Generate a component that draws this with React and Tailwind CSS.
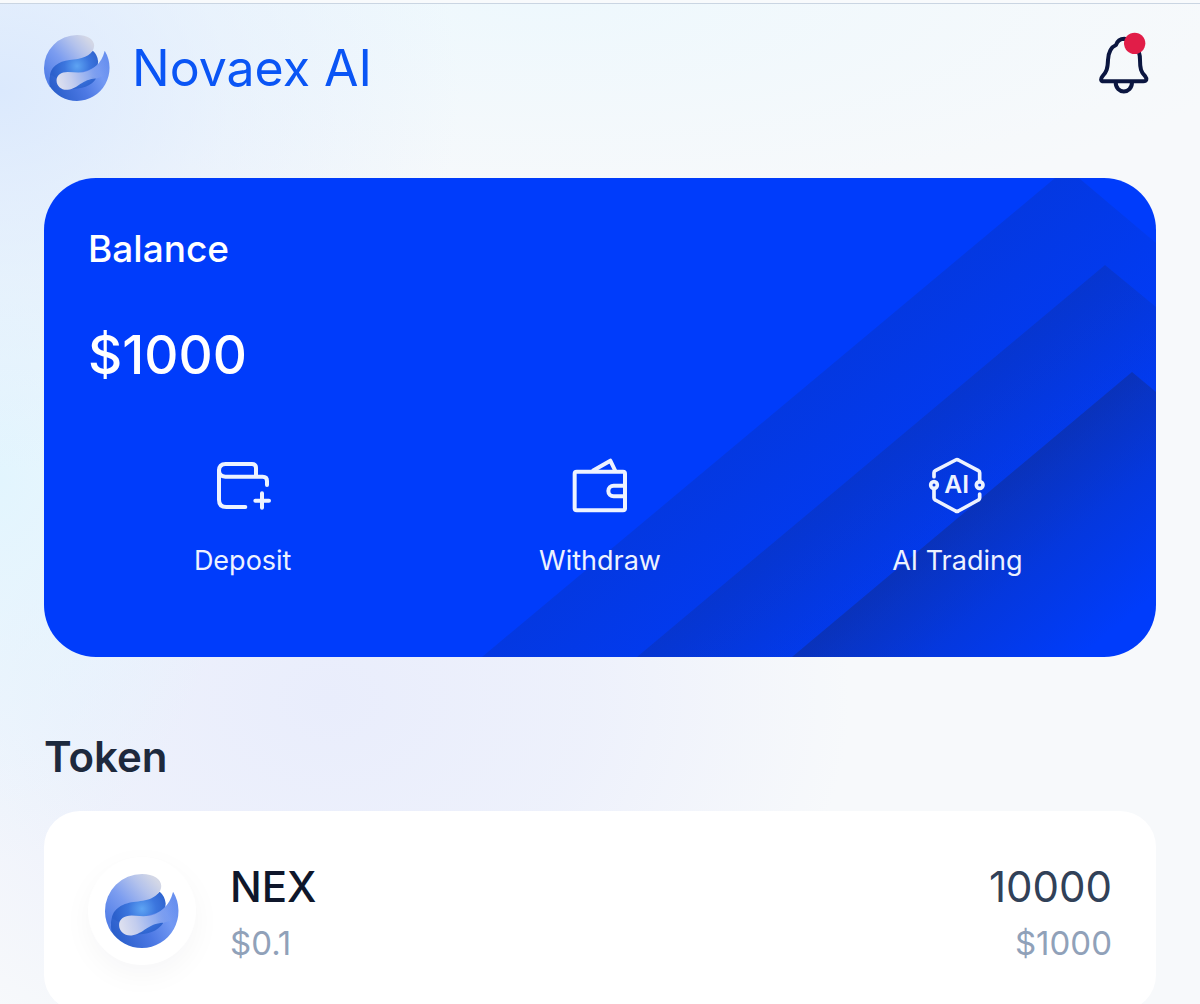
import React, { useId } from "react";

function Logo({ className }) {
  const id = useId();

  return (
    <svg viewBox="0 0 100 100" className={className} aria-hidden="true">
      <defs>
        <linearGradient id={`${id}-top`} x1="0.9" y1="0.1" x2="0.1" y2="0.85">
          <stop offset="0" stopColor="#d3d7e6" />
          <stop offset="0.25" stopColor="#b3c2ec" />
          <stop offset="0.6" stopColor="#7c9df0" />
          <stop offset="1" stopColor="#5480e8" />
        </linearGradient>
        <radialGradient
          id={`${id}-mid`}
          gradientUnits="userSpaceOnUse"
          cx="50"
          cy="47"
          r="38"
        >
          <stop offset="0" stopColor="#5ea4f3" />
          <stop offset="0.5" stopColor="#3c76de" />
          <stop offset="1" stopColor="#2c60cc" />
        </radialGradient>
        <linearGradient id={`${id}-body`} x1="0.05" y1="0.7" x2="1" y2="0.3">
          <stop offset="0" stopColor="#2c60cc" />
          <stop offset="0.45" stopColor="#4d79e4" />
          <stop offset="0.8" stopColor="#7399f3" />
          <stop offset="1" stopColor="#6890ef" />
        </linearGradient>
        <linearGradient id={`${id}-drop`} x1="0" y1="0.6" x2="1" y2="0.4">
          <stop offset="0" stopColor="#dcdfef" />
          <stop offset="0.25" stopColor="#c3cdee" />
          <stop offset="0.6" stopColor="#8eabf0" />
          <stop offset="1" stopColor="#6a91ef" stopOpacity="0" />
        </linearGradient>
      </defs>
      <path
        d="M74 24Q81 30 82 40L79 68Q68 84 42 85L9 77Q4 50 20 40L62 32Z"
        fill={`url(#${id}-mid)`}
      />
      <path
        d="M92 24A50 50 0 0 1 50 100A50 50 0 0 1 8 77C7 72 8 66 10 60L20 66C20 77 27 82 38 82C58 82 71 78 79 66L56 56C75 54 87 44 92 24Z"
        fill={`url(#${id}-body)`}
      />
      <path
        d="M92 24C87 44 73 57 52 57L36 56C26 56 19 61 19 69C19 78 27 84 36 83C53 81 57 67 79 66L98 60Q100 40 92 24Z"
        fill={`url(#${id}-drop)`}
      />
      <path
        d="M9 79A50 50 0 0 1 0 50A50 50 0 0 1 50 0C66 0 76 7 76 16C76 28 62 36 45 37C28 38 12 44 9 60Q7 68 9 79Z"
        fill={`url(#${id}-top)`}
      />
    </svg>
  );
}

function BellIcon() {
  return (
    <svg
      viewBox="54 36 156 186"
      className="h-[62px] w-[52px]"
      fill="none"
      stroke="#0b1640"
      strokeWidth="12"
      strokeLinecap="round"
      strokeLinejoin="round"
      aria-hidden="true"
    >
      <path d="M72 184C60 184 62 175 68 168C80 155 83 146 84 120C85 96 92 82 108 75C112 62 120 56 133 56C160 58 180 84 180 120C180 145 183 157 195 168C202 177 200 184 190 184Z" />
      <path d="M107 186C107 224 156 224 156 186" />
      <circle cx="164" cy="70" r="32" fill="#e11d48" stroke="none" />
    </svg>
  );
}

function DepositIcon() {
  return (
    <svg
      viewBox="41 45 180 180"
      className="size-[60px]"
      fill="none"
      stroke="currentColor"
      strokeWidth="12"
      strokeLinecap="round"
      aria-hidden="true"
    >
      <path d="M138 201H81Q59 201 59 179V92Q59 72 79 72H158Q170 72 170 84V108" />
      <path d="M59 91Q59 110 78 110H190Q203 110 203 123V135" />
      <path d="M188 160V203M168 182H209" />
    </svg>
  );
}

function WithdrawIcon() {
  return (
    <svg
      viewBox="45 45 180 180"
      className="size-[60px]"
      fill="none"
      stroke="currentColor"
      strokeWidth="12"
      strokeLinejoin="round"
      aria-hidden="true"
    >
      <rect x="59" y="95" width="151" height="116" rx="6" />
      <path d="M112 93L166 62L181 93" />
      <path d="M210 137H176A16 16 0 0 0 176 169H210" />
    </svg>
  );
}

function TradingIcon() {
  return (
    <svg
      viewBox="49 45 180 180"
      className="size-[60px]"
      fill="none"
      stroke="currentColor"
      strokeWidth="11"
      strokeLinecap="round"
      strokeLinejoin="round"
      aria-hidden="true"
    >
      <path d="M70 110V98Q70 94 74 92L135 60Q139 58 143 60L203 92Q207 94 207 98V125" />
      <path d="M70 146V174Q70 178 74 180L135 213Q139 215 143 213L203 180Q207 178 207 174V162" />
      <circle cx="70" cy="135" r="10" />
      <circle cx="207" cy="135" r="10" />
      <text
        x="138"
        y="160"
        textAnchor="middle"
        fontSize="74"
        fontWeight="600"
        fill="currentColor"
        stroke="none"
      >
        AI
      </text>
    </svg>
  );
}

function CardStripes() {
  return (
    <svg
      viewBox="0 0 1112 479"
      preserveAspectRatio="xMaxYMax slice"
      className="absolute inset-0 size-full"
      aria-hidden="true"
    >
      <defs>
        <linearGradient id="stripe1" gradientUnits="userSpaceOnUse" x1="730" y1="234" x2="875" y2="407">
          <stop offset="0" stopColor="#14297a" stopOpacity="0.2" />
          <stop offset="1" stopColor="#14297a" stopOpacity="0" />
        </linearGradient>
        <linearGradient id="stripe2" gradientUnits="userSpaceOnUse" x1="827" y1="283" x2="945" y2="424">
          <stop offset="0" stopColor="#14297a" stopOpacity="0.25" />
          <stop offset="1" stopColor="#14297a" stopOpacity="0" />
        </linearGradient>
        <linearGradient id="stripe3" gradientUnits="userSpaceOnUse" x1="918" y1="337" x2="1038" y2="480">
          <stop offset="0" stopColor="#14297a" stopOpacity="0.42" />
          <stop offset="1" stopColor="#14297a" stopOpacity="0" />
        </linearGradient>
      </defs>
      <path d="M438 479L1023 -10L1112 65V479Z" fill="url(#stripe1)" />
      <path d="M593 479L1061 87L1112 129V479Z" fill="url(#stripe2)" />
      <path d="M748 479L1088 194L1112 214V479Z" fill="url(#stripe3)" />
    </svg>
  );
}

const actions = [
  { label: "Deposit", icon: DepositIcon },
  { label: "Withdraw", icon: WithdrawIcon },
  { label: "AI Trading", icon: TradingIcon },
];

const tokens = [{ symbol: "NEX", price: "$0.1", amount: "10000", value: "$1000" }];

function App() {
  return (
    <div className="min-h-screen bg-[#f7f9fb] bg-[radial-gradient(ellipse_460px_380px_at_0px_90px,#dbe9fd,#dbe9fd66_50%,#dbe9fd00),radial-gradient(ellipse_240px_380px_at_0px_480px,#e2f5fe,#e2f5fe80_50%,#e2f5fe00),radial-gradient(ellipse_520px_400px_at_330px_700px,#e9edfc,#e9edfcaa_50%,#e9edfc00),radial-gradient(ellipse_760px_220px_at_540px_0px,#eef8fd,#eef8fd00)] font-['Inter',sans-serif]">
      <div className="h-1 border-b border-slate-300 bg-slate-50" />

      <header className="flex items-start justify-between px-11 pt-7">
        <div className="flex items-center gap-[22px]">
          <Logo className="size-[66px]" />
          <h1 className="text-[50px] leading-[72px] text-[#0a55f5]">Novaex AI</h1>
        </div>
        <button type="button" aria-label="Notifications" className="mr-1.5">
          <BellIcon />
        </button>
      </header>

      <main className="px-11 pt-[74px]">
        <section className="relative overflow-hidden rounded-[52px] bg-[#003cfb] pt-[47px] pb-[78px] text-white">
          <CardStripes />
          <div className="relative px-11">
            <h2 className="text-[37px] leading-[48px] font-medium">Balance</h2>
            <p className="mt-12 text-[53px] leading-[68px] font-medium">$1000</p>
          </div>
          <div className="relative mt-[66px] grid grid-cols-3 px-5">
            {actions.map(({ label, icon: Icon }) => (
              <button
                key={label}
                type="button"
                className="flex flex-col items-center gap-7 text-[#edf2ff]"
              >
                <Icon />
                <span className="text-[27px] leading-9">{label}</span>
              </button>
            ))}
          </div>
        </section>

        <h2 className="mt-[72px] text-[42px] leading-[56px] font-semibold text-slate-800">
          Token
        </h2>
        <ul className="mt-[26px] space-y-6">
          {tokens.map((token) => (
            <li
              key={token.symbol}
              className="flex items-center rounded-[36px] bg-white px-11 py-[46px]"
            >
              <div className="flex size-[108px] items-center justify-center rounded-full bg-white shadow-[0_10px_30px_rgba(15,23,42,0.04)]">
                <Logo className="size-[74px]" />
              </div>
              <div className="ml-[34px] flex-1">
                <p className="text-[42px] leading-[56px] font-medium text-slate-900">
                  {token.symbol}
                </p>
                <p className="mt-2 text-[33px] leading-10 text-slate-400">{token.price}</p>
              </div>
              <div className="text-right">
                <p className="text-[42px] leading-[56px] text-slate-700">{token.amount}</p>
                <p className="mt-2 text-[33px] leading-10 text-slate-400">{token.value}</p>
              </div>
            </li>
          ))}
        </ul>
      </main>
    </div>
  );
}

export default App;
